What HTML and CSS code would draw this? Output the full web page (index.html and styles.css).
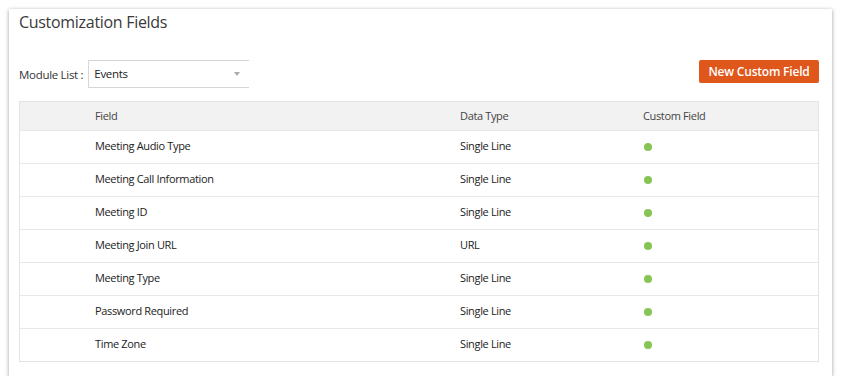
FILE: index.html
```html
<!DOCTYPE html>
<html>
<head>
<meta charset="utf-8">
<link rel="stylesheet" href="styles.css">
</head>
<body>
<div class="card">
  <h1 class="title">Customization Fields</h1>
  <div class="toolbar">
    <div class="module">
      <span class="module-label">Module List :</span>
      <div class="select">
        <span>Events</span>
        <span class="caret"></span>
      </div>
    </div>
    <button class="btn">New Custom Field</button>
  </div>
  <div class="table">
    <div class="row head">
      <div>Field</div><div>Data Type</div><div>Custom Field</div>
    </div>
    <div class="row"><div>Meeting Audio Type</div><div>Single Line</div><div><span class="dot"></span></div></div>
    <div class="row"><div>Meeting Call Information</div><div>Single Line</div><div><span class="dot"></span></div></div>
    <div class="row"><div>Meeting ID</div><div>Single Line</div><div><span class="dot"></span></div></div>
    <div class="row"><div>Meeting Join URL</div><div>URL</div><div><span class="dot"></span></div></div>
    <div class="row"><div>Meeting Type</div><div>Single Line</div><div><span class="dot"></span></div></div>
    <div class="row"><div>Password Required</div><div>Single Line</div><div><span class="dot"></span></div></div>
    <div class="row"><div>Time Zone</div><div>Single Line</div><div><span class="dot"></span></div></div>
  </div>
</div>
</body>
</html>
```
FILE: styles.css
```css
html, body { margin: 0; padding: 0; background: #fff; }
body { font-family: "Open Sans", "Noto Sans", sans-serif; color: #333; }
.card {
  margin: 9px 0 0 9px;
  width: 823px;
  height: 367px;
  box-sizing: border-box;
  padding: 1px 13px 0 10px;
  background: #fff;
  box-shadow: 0 1px 4px rgba(0,0,0,0.4);
}
.title {
  margin: 0;
  font-size: 16px;
  font-weight: 400;
  letter-spacing: -0.3px;
  line-height: 24px;
  color: #3a3a3a;
}
.toolbar {
  display: flex;
  justify-content: space-between;
  align-items: flex-start;
  margin-top: 26px;
}
.module { display: flex; align-items: center; }
.module-label { font-size: 11.5px; letter-spacing: -0.3px; color: #333; margin-right: 5px; }
.select {
  width: 155px;
  height: 25px;
  border: 1px solid #d6d6d6;
  border-right: none;
  display: flex;
  align-items: center;
  justify-content: space-between;
  padding-left: 5px;
  box-sizing: content-box;
  font-size: 11.5px;
  letter-spacing: -0.3px;
  color: #222;
  padding-bottom: 1px;
}
.caret {
  width: 0; height: 0;
  border-left: 3px solid transparent;
  border-right: 3px solid transparent;
  border-top: 4px solid #aaa;
  margin-right: 9px;
}
.btn {
  background: #e0571c;
  color: #fff;
  border: none;
  border-radius: 2px;
  font-family: "Open Sans", "Noto Sans", sans-serif;
  font-size: 12px;
  font-weight: 600;
  letter-spacing: -0.2px;
  width: 120px;
  height: 23px;
  padding: 0;
}
.table {
  margin-top: 13px;
  border: 1px solid #e3e3e3;
  width: 800px;
  box-sizing: border-box;
}
.row {
  display: grid;
  grid-template-columns: 365px 183px 1fr;
  padding-left: 75px;
  height: 33px;
  padding-bottom: 4px;
  align-items: center;
  font-size: 11px;
  letter-spacing: -0.35px;
  color: #222;
  border-top: 1px solid #e8e8e8;
  box-sizing: border-box;
}
.row.head {
  border-top: none;
  background: #f2f2f2;
  height: 28px;
  padding-bottom: 1px;
  color: #444;
}
.dot {
  display: block;
  width: 8px; height: 8px;
  border-radius: 50%;
  background: #86c553;
  margin-left: 1px;
  margin-top: 3px;
}
```
